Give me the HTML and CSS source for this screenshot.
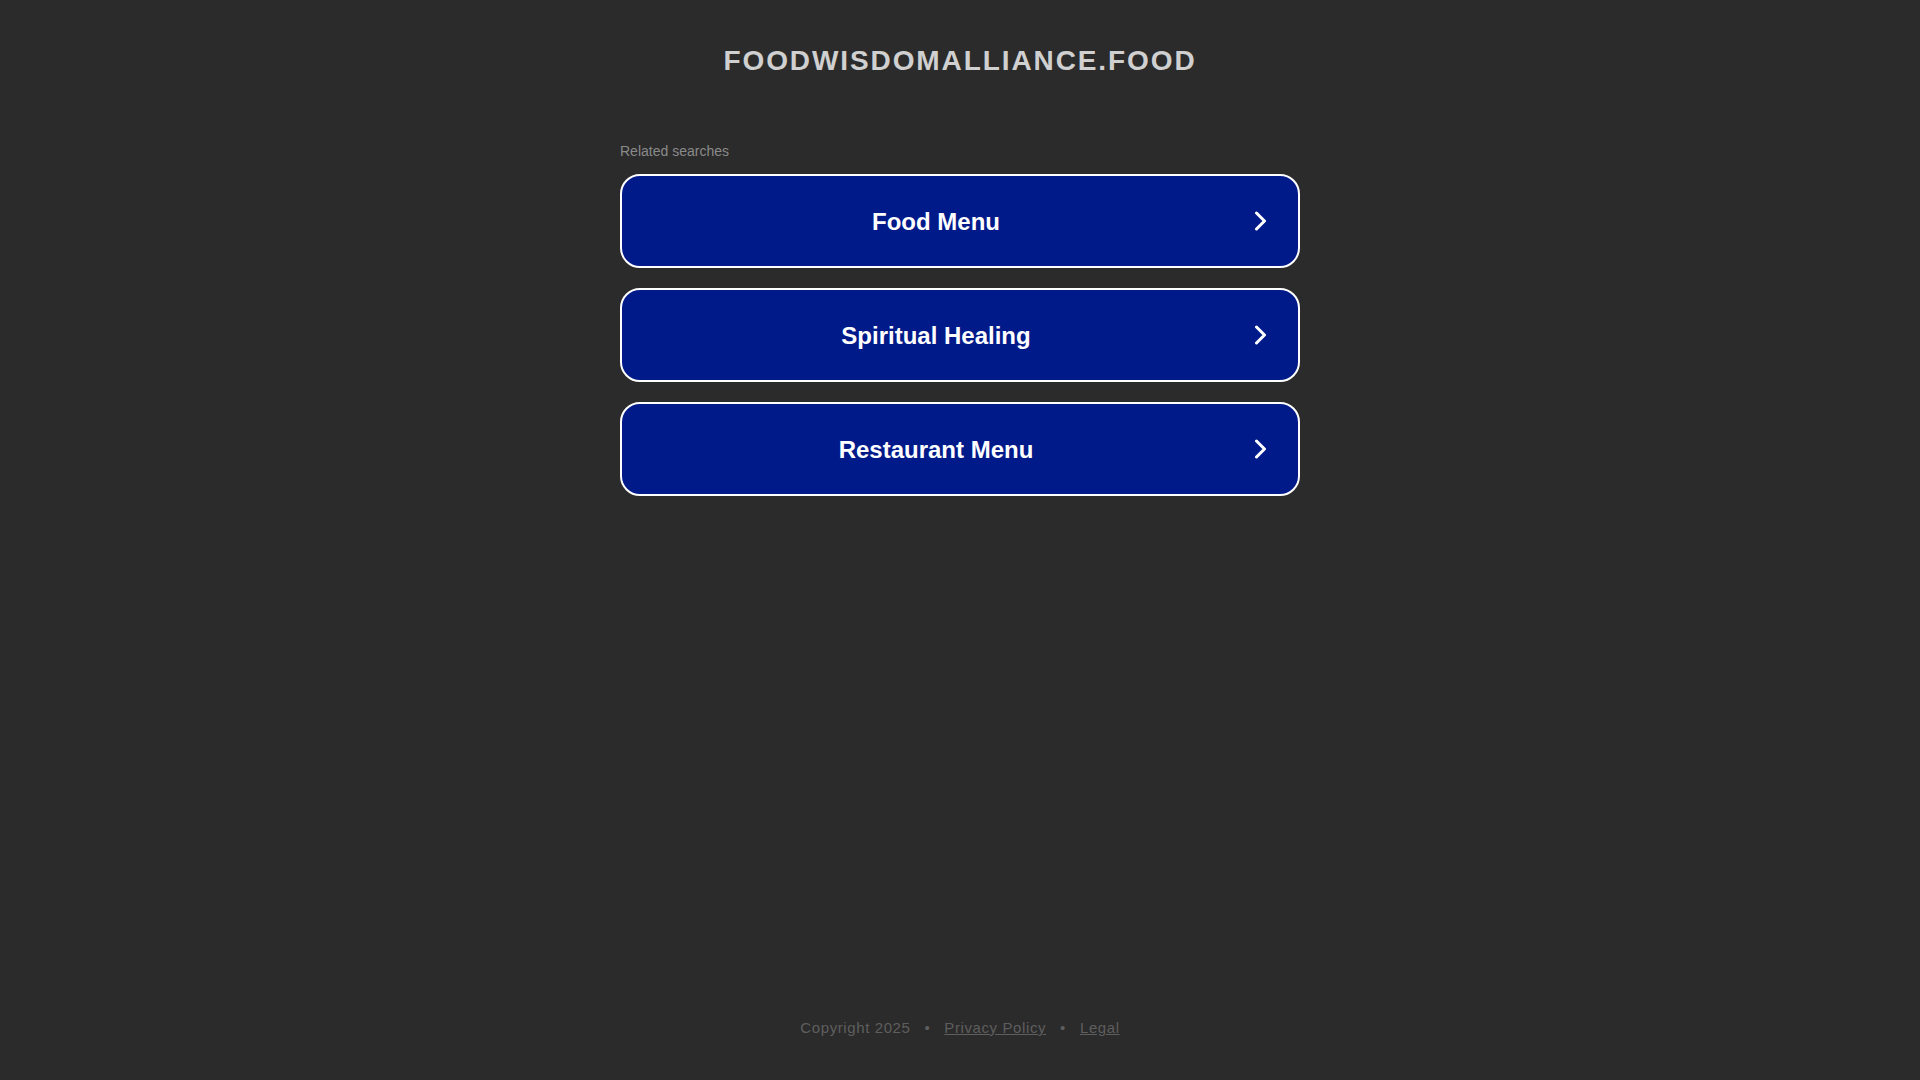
FILE: index.html
```html
<!DOCTYPE html>
<html lang="en">
<head>
<meta charset="utf-8">
<title>foodwisdomalliance.food</title>
<link rel="stylesheet" href="styles.css">
</head>
<body>
<div class="page">
  <header class="header">
    <h1 class="domain">foodwisdomalliance.food</h1>
  </header>
  <main class="content">
    <div class="related-title">Related searches</div>
    <ul class="links">
      <li><a class="link" href="#"><span class="link-text">Food Menu</span><span class="link-arrow"><svg width="14" height="20" viewBox="0 0 14 20"><path d="M2.5 2 L10.5 10 L2.5 18" fill="none" stroke="#fff" stroke-width="3" stroke-linecap="round" stroke-linejoin="round"/></svg></span></a></li>
      <li><a class="link" href="#"><span class="link-text">Spiritual Healing</span><span class="link-arrow"><svg width="14" height="20" viewBox="0 0 14 20"><path d="M2.5 2 L10.5 10 L2.5 18" fill="none" stroke="#fff" stroke-width="3" stroke-linecap="round" stroke-linejoin="round"/></svg></span></a></li>
      <li><a class="link" href="#"><span class="link-text">Restaurant Menu</span><span class="link-arrow"><svg width="14" height="20" viewBox="0 0 14 20"><path d="M2.5 2 L10.5 10 L2.5 18" fill="none" stroke="#fff" stroke-width="3" stroke-linecap="round" stroke-linejoin="round"/></svg></span></a></li>
    </ul>
  </main>
  <footer class="footer">
    <span>Copyright 2025</span><span class="sep">•</span><a href="#">Privacy Policy</a><span class="sep">•</span><a href="#">Legal</a>
  </footer>
</div>
</body>
</html>
```

FILE: styles.css
```css
html, body {
  margin: 0;
  padding: 0;
  background: #2b2b2b;
  font-family: Arial, "Liberation Sans", Helvetica, sans-serif;
}

.page {
  min-height: 100vh;
  display: flex;
  flex-direction: column;
  align-items: center;
  box-sizing: border-box;
}

.header {
  padding-top: 45px;
}

.domain {
  margin: 0;
  font-size: 28px;
  font-weight: bold;
  text-transform: uppercase;
  letter-spacing: 1.9px;
  color: #d0d0d0;
  text-align: center;
}

.content {
  width: 680px;
  margin-top: 66px;
}

.related-title {
  font-size: 14px;
  color: #8a8a8a;
  margin-bottom: 15px;
}

.links {
  list-style: none;
  margin: 0;
  padding: 0;
  display: flex;
  flex-direction: column;
  gap: 20px;
}

.link {
  display: flex;
  align-items: center;
  height: 94px;
  box-sizing: border-box;
  border: 2px solid #ffffff;
  border-radius: 20px;
  background: #011a8a;
  color: #ffffff;
  text-decoration: none;
  padding: 0 13px;
}

.link-text {
  flex: 1;
  text-align: center;
  font-size: 24px;
  font-weight: bold;
  padding-top: 1px;
}

.link-arrow {
  width: 48px;
  display: flex;
  justify-content: center;
  align-items: center;
}

.link-arrow svg {
  display: block;
}

.footer {
  margin-top: auto;
  margin-bottom: 44px;
  font-size: 15px;
  letter-spacing: 0.6px;
  color: #5e5e5e;
}

.footer a {
  color: #5e5e5e;
  text-decoration: underline;
}

.sep {
  padding: 0 14px;
}
```
